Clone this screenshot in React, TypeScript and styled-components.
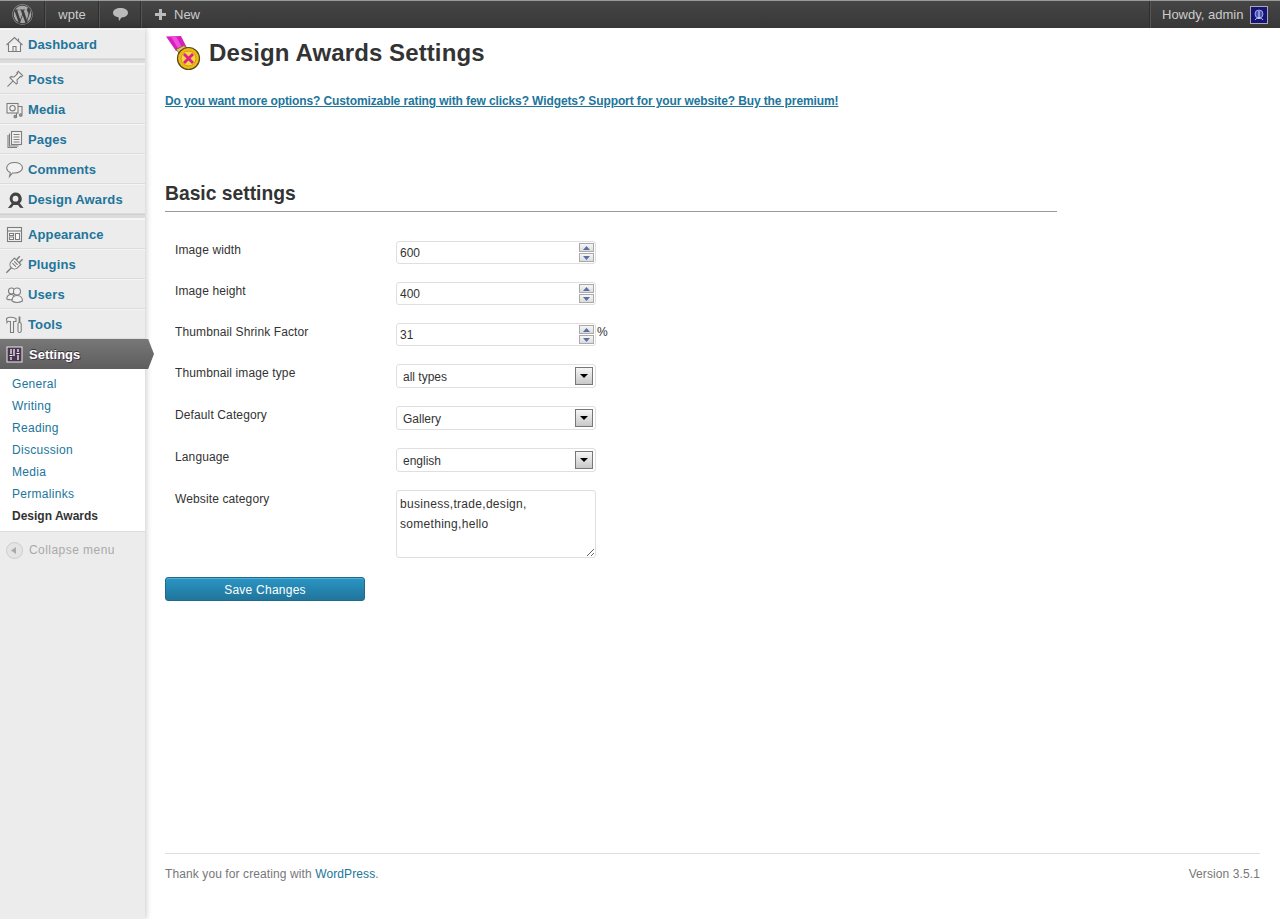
import React from "react";
import styled, { createGlobalStyle } from "styled-components";
import { FaWordpress } from "react-icons/fa";

const Global = createGlobalStyle`
  html, body { margin: 0; padding: 0; height: 100%; background: #fff; }
  body { font-family: "Liberation Sans", Arial, sans-serif; font-size: 12px; color: #333; }
  #root { height: 100%; }
`;

const Page = styled.div`
  display: flex;
  flex-direction: column;
  height: 919px;
  overflow: hidden;
`;

const TopBar = styled.header`
  display: flex;
  align-items: stretch;
  height: 28px;
  flex: none;
  background: linear-gradient(to bottom, #464646, #373737);
  border-top: 1px solid #9a9a9a;
  box-sizing: border-box;
  color: #ccc;
  font-size: 13px;
`;

const BarItem = styled.div<{ $w: number; $plain?: boolean }>`
  display: flex;
  align-items: center;
  gap: 8px;
  box-sizing: border-box;
  width: ${(p) => p.$w}px;
  padding-left: ${(p) => (p.$w > 60 ? 13 : 0)}px;
  justify-content: ${(p) => (p.$w > 60 ? "flex-start" : "center")};
  margin-right: 1px;
  ${(p) => (p.$plain ? "" : "border-right: 1px solid #2f2f2f; box-shadow: 1px 0 0 #555;")}
`;

const BarSpacer = styled.div`
  flex: 1;
`;

const BarUser = styled.div`
  display: flex;
  align-items: center;
  gap: 7px;
  width: 131px;
  box-sizing: border-box;
  padding-left: 12px;
  border-left: 1px solid #2f2f2f;
  box-shadow: inset 1px 0 0 #555;
`;

const Avatar = styled.svg`
  width: 18px;
  height: 18px;
  flex: none;
`;

const Body = styled.div`
  flex: 1;
  display: flex;
  min-height: 0;
`;

const Sidebar = styled.nav`
  width: 145px;
  flex: none;
  background: #ececec;
  position: relative;
  box-shadow: 1px 0 6px rgba(0, 0, 0, 0.22);
  z-index: 1;
  padding-top: 1px;
`;

const MenuItem = styled.a<{ $active?: boolean }>`
  position: relative;
  display: flex;
  align-items: center;
  height: 30px;
  box-sizing: border-box;
  padding-left: 6px;
  gap: ${(p) => (p.$active ? 6 : 5)}px;
  font-size: 13px;
  font-weight: bold;
  letter-spacing: ${(p) => (p.$active ? 0 : 0.12)}px;
  color: ${(p) => (p.$active ? "#fff" : "#21759b")};
  text-shadow: ${(p) => (p.$active ? "0 -1px 0 #333, 1px 1px 0 #4a3550" : "none")};
  background: ${(p) => (p.$active ? "linear-gradient(to bottom, #777, #5e5e5e)" : "transparent")};
  border-top: ${(p) => (p.$active ? "0" : "1px solid #f5f5f5")};
  border-bottom: ${(p) => (p.$active ? "0" : "1px solid #dcdcdc")};
  ${(p) =>
    p.$active
      ? `&::after {
          content: "";
          position: absolute;
          left: 100%;
          top: 0;
          width: 9px;
          height: 30px;
          background: linear-gradient(to bottom, #777, #5e5e5e);
          clip-path: polygon(0 0, 35% 0, 100% 50%, 35% 100%, 0 100%);
        }`
      : ""}
`;

const MenuSeparator = styled.div`
  height: 5px;
  background: #dcdcdc;
  border-top: 1px solid #d0d0d0;
  border-bottom: 1px solid #f5f5f5;
  box-sizing: border-box;
`;

const IconSvg = styled.svg`
  width: 17px;
  height: 17px;
  flex: none;
  fill: #f2f2f2;
  stroke: #7d7d7d;
  stroke-width: 1.1;
  overflow: visible;
`;

const SubMenu = styled.div`
  background: #fff;
  padding: 4px 0;
  border-bottom: 1px solid #dcdcdc;
`;

const SubItem = styled.a<{ $current?: boolean }>`
  display: block;
  height: 22px;
  line-height: 22px;
  padding-left: 12px;
  font-size: 12px;
  letter-spacing: ${(p) => (p.$current ? 0 : 0.3)}px;
  color: ${(p) => (p.$current ? "#333" : "#21759b")};
  font-weight: ${(p) => (p.$current ? "bold" : "normal")};
`;

const Collapse = styled.div`
  display: flex;
  align-items: center;
  gap: 6px;
  height: 36px;
  padding-left: 6px;
  color: #aaa;
  font-size: 12px;
  letter-spacing: 0.45px;
`;

const Main = styled.main`
  flex: 1;
  min-width: 0;
  display: flex;
  flex-direction: column;
  padding: 0 20px;
`;

const TitleRow = styled.div`
  display: flex;
  align-items: center;
  gap: 7px;
  padding-top: 7px;
  height: 37px;
`;

const Title = styled.h2`
  margin: 0 0 2px;
  font-size: 24px;
  font-weight: bold;
  line-height: 30px;
  letter-spacing: 0.1px;
  color: #333;
`;

const PromoLink = styled.a`
  display: block;
  margin-top: 22px;
  font-size: 12px;
  line-height: 14px;
  font-weight: bold;
  letter-spacing: -0.11px;
  color: #21759b;
  text-decoration: underline;
`;

const SectionTitle = styled.h3`
  margin: 74px 0 0;
  width: 892px;
  font-size: 19.3px;
  line-height: 24px;
  font-weight: bold;
  color: #333;
  padding-bottom: 5px;
  border-bottom: 1px solid #999;
`;

const Form = styled.form`
  margin: 29px 0 0;
  display: flex;
  flex-direction: column;
`;

const Row = styled.div<{ $gap: number }>`
  display: flex;
  align-items: flex-start;
  margin-bottom: ${(p) => p.$gap}px;
`;

const Label = styled.label`
  width: 231px;
  flex: none;
  box-sizing: border-box;
  padding: 2px 0 0 10px;
  font-size: 12px;
  line-height: 14px;
  letter-spacing: 0.12px;
  color: #333;
`;

const Field = styled.div<{ $h: number }>`
  width: 200px;
  height: ${(p) => p.$h}px;
  box-sizing: border-box;
  display: flex;
  align-items: center;
  background: #fff;
  border: 1px solid #dfdfdf;
  border-radius: 3px;
`;

const NumberInput = styled.input`
  flex: 1;
  min-width: 0;
  border: 0;
  outline: 0;
  padding: 1px 0 0 3px;
  background: transparent;
  font: 12px "Liberation Sans", Arial, sans-serif;
  color: #333;
`;

const Spinner = styled.div`
  width: 15px;
  height: 19px;
  margin-right: 1px;
  flex: none;
  display: flex;
  flex-direction: column;
  justify-content: space-between;
`;

const SpinButton = styled.div`
  height: 9px;
  box-sizing: border-box;
  border: 1px solid #a9a9a9;
  background: linear-gradient(to bottom, #f6f6f6, #dcdcdc);
  display: flex;
  align-items: center;
  justify-content: center;
`;

const SpinArrow = styled.svg`
  width: 7px;
  height: 4px;
  fill: #5a6fa8;
`;

const Percent = styled.span`
  margin-left: 1px;
  line-height: 14px;
  padding-top: 2px;
  color: #333;
`;

const SelectText = styled.span`
  flex: 1;
  padding: 1px 0 0 6px;
  font-size: 12px;
  color: #333;
`;

const SelectButton = styled.div`
  width: 18px;
  height: 18px;
  margin-right: 2px;
  box-sizing: border-box;
  flex: none;
  border: 1px solid #777;
  background: linear-gradient(to bottom, #f6f6f6, #c8c8c8);
  display: flex;
  align-items: center;
  justify-content: center;
`;

const SelectArrow = styled.svg`
  width: 8px;
  height: 4px;
  fill: #000;
`;

const TextArea = styled.textarea`
  width: 200px;
  height: 68px;
  box-sizing: border-box;
  border: 1px solid #dfdfdf;
  border-radius: 3px;
  outline: 0;
  padding: 3px 3px;
  margin: 0;
  font: 12px/20px "Liberation Sans", Arial, sans-serif;
  letter-spacing: 0.3px;
  color: #333;
  display: block;
`;

const SaveButton = styled.button`
  width: 200px;
  height: 24px;
  padding: 2px 0 0;
  border: 1px solid #1f6a8c;
  border-radius: 3px;
  background: linear-gradient(to bottom, #2a95c5, #21759b);
  color: #fff;
  font: 12px "Liberation Sans", Arial, sans-serif;
  letter-spacing: 0.25px;
  box-shadow: inset 0 1px 0 rgba(120, 200, 230, 0.5);
`;

const Footer = styled.footer`
  margin-top: auto;
  height: 66px;
  box-sizing: border-box;
  border-top: 1px solid #dfdfdf;
  padding-top: 13px;
  display: flex;
  justify-content: space-between;
  font-size: 12px;
  line-height: 14px;
  letter-spacing: 0.1px;
  color: #777;
`;

const FooterLink = styled.a`
  color: #21759b;
`;

type IconProps = { children: React.ReactNode };
const Ico = ({ children }: IconProps) => <IconSvg viewBox="0 0 17 17">{children}</IconSvg>;

const icons: Record<string, React.ReactNode> = {
  Dashboard: (
    <Ico>
      <path d="M2.500 8v7.500h12V8" />
      <path d="M.5 9 8.500 1.500 16.500 9M7 15.500V10.500h3v5M12.500 2.500v2.500" fill="none" />
    </Ico>
  ),
  Posts: (
    <Ico>
      <g transform="rotate(45 8.500 8.500)">
        <path d="M8.500 10v8.500" fill="none" />
        <path d="M5.500 0h6v2h-1v5l2.500 2v1.500H4V9l2.500-2V2h-1z" />
      </g>
    </Ico>
  ),
  Media: (
    <Ico>
      <path d="M12 5.500h4V13M10.500 12v3.500" fill="none" />
      <rect x="1" y="2.500" width="11" height="9.500" />
      <circle cx="6.500" cy="7.200" r="2.700" />
      <circle cx="14.800" cy="14" r="1.300" fill="#999" />
      <circle cx="9.300" cy="15.500" r="1.300" fill="#999" />
    </Ico>
  ),
  Pages: (
    <Ico>
      <path d="M2 4v12.500h9" />
      <path d="M3.500 2.500v12.500h9" />
      <rect x="5.500" y=".5" width="10" height="13" />
      <path d="M7.500 3.500h6M7.500 6h6M7.500 8.500h6M7.500 11h6" fill="none" />
    </Ico>
  ),
  Comments: (
    <Ico>
      <path d="M8.500 1.500c4.200 0 8 2 8 5.200s-3.800 5.300-8 5.300H6.500L3.500 15.500l.8-4C2 10.500.7 8.700.7 6.700c0-3.200 3.600-5.200 7.800-5.200z" />
    </Ico>
  ),
  "Design Awards": (
    <IconSvg viewBox="0 0 17 17">
      <path
        d="M9.500 0a6.200 6.200 0 0 1 4.300 10.700l3.800 4.800-3.600-.3-2-2.700H7.500l-2 2.700-3.600.3 3.800-4.800A6.200 6.200 0 0 1 9.500 0zm0 3.300a2.900 2.900 0 1 0 0 5.800 2.900 2.900 0 0 0 0-5.800z"
        fill="#444"
        stroke="none"
        transform="translate(0 1.500)"
      />
    </IconSvg>
  ),
  Appearance: (
    <Ico>
      <rect x="1.500" y="1.500" width="14" height="14" />
      <path d="M1.500 5h14" fill="none" />
      <path d="M3.500 7.500h4v2h-4zM3.500 11h4v2.500h-4zM9.500 7.500h4v6h-4z" fill="#fff" />
    </Ico>
  ),
  Plugins: (
    <Ico>
      <g transform="rotate(45 8.500 8.500)">
        <path d="M6.500 4V-1M10.500 4V-1M8.500 13v7" fill="none" strokeWidth="1.400" />
        <path d="M4 4h9v4.500c0 2.500-2 4.500-4.500 4.500S4 11 4 8.500z" />
        <path d="M6 6.500h5M6 9h5" fill="none" />
      </g>
    </Ico>
  ),
  Users: (
    <Ico>
      <path d="M.8 13c0-3 2-4.500 4.700-4.500s3 1.500 3 4.500c-2.500 1-5.500 1-7.700 0z" />
      <circle cx="5.500" cy="5" r="3" />
      <path d="M6 15c0-3.500 2-5.500 5-5.500s5.500 2 5.500 5.500c-3.500 1.800-7.500 1.800-10.500 0z" />
      <circle cx="11" cy="5.500" r="3.500" />
    </Ico>
  ),
  Tools: (
    <Ico>
      <path d="M.5 2.500c2-1.500 6-1.500 9.500 0V5.500H7.500V16.500H4.500V5.500c-1.500-.5-3 0-3.500 1z" />
      <path d="M13.500 .5v6" fill="none" strokeWidth="1.800" />
      <rect x="12" y="6.500" width="3.200" height="10" rx="1.500" />
    </Ico>
  ),
  Settings: (
    <IconSvg viewBox="0 0 17 17">
      <rect x="1" y="1" width="15" height="15" fill="#4a3550" stroke="#ddd" />
      <path d="M5 3v5M5 11v3M8 3v7M12 3v3M12 9v5M3.500 9.500h3M10.500 7.500h3" stroke="#fff" strokeWidth="1.200" fill="none" />
    </IconSvg>
  ),
};

const MenuRow = ({ name, active }: { name: string; active?: boolean }) => (
  <MenuItem $active={active}>
    {icons[name]}
    {name}
  </MenuItem>
);

const NumberRow = ({ label, value, suffix }: { label: string; value: string; suffix?: string }) => (
  <Row $gap={18}>
    <Label>{label}</Label>
    <Field $h={23}>
      <NumberInput defaultValue={value} />
      <Spinner>
        <SpinButton>
          <SpinArrow viewBox="0 0 7 4">
            <path d="M3.500 0 7 4H0z" />
          </SpinArrow>
        </SpinButton>
        <SpinButton>
          <SpinArrow viewBox="0 0 7 4">
            <path d="M0 0h7L3.500 4z" />
          </SpinArrow>
        </SpinButton>
      </Spinner>
    </Field>
    {suffix && <Percent>{suffix}</Percent>}
  </Row>
);

const SelectRow = ({ label, value }: { label: string; value: string }) => (
  <Row $gap={18}>
    <Label>{label}</Label>
    <Field $h={24}>
      <SelectText>{value}</SelectText>
      <SelectButton>
        <SelectArrow viewBox="0 0 8 4">
          <path d="M0 0h8L4 4z" />
        </SelectArrow>
      </SelectButton>
    </Field>
  </Row>
);

export default function App() {
  return (
    <Page>
      <Global />
      <TopBar>
        <BarItem $w={45}>
          <FaWordpress size={21} color="#a8a8a8" />
        </BarItem>
        <BarItem $w={53}>wpte</BarItem>
        <BarItem $w={41}>
          <svg width="15" height="13" viewBox="0 0 15 13">
            <path
              d="M7.500 0C11.600 0 15 1.800 15 4.800S11.600 9.500 8.500 9.500L6 13l-.5-3.700C2.500 8.800 0 7.500 0 4.800 0 1.800 3.400 0 7.500 0z"
              fill="#bbb"
            />
          </svg>
        </BarItem>
        <BarItem $w={71} $plain>
          <svg width="11" height="11" viewBox="0 0 11 11">
            <path d="M4 0h3v4h4v3H7v4H4V7H0V4h4z" fill="#bbb" />
          </svg>
          New
        </BarItem>
        <BarSpacer />
        <BarUser>
          Howdy, admin
          <Avatar viewBox="0 0 18 18">
            <rect x="0.500" y="0.500" width="17" height="17" fill="#14147a" stroke="#aaa" />
            <circle cx="9" cy="8" r="4" fill="#4a50b0" stroke="#9fa8e0" />
            <path d="M5 14c1-2.500 7-2.500 8 0M9 5v8" stroke="#d8dcf5" fill="none" />
          </Avatar>
        </BarUser>
      </TopBar>
      <Body>
        <Sidebar>
          <MenuRow name="Dashboard" />
          <MenuSeparator />
          <MenuRow name="Posts" />
          <MenuRow name="Media" />
          <MenuRow name="Pages" />
          <MenuRow name="Comments" />
          <MenuRow name="Design Awards" />
          <MenuSeparator />
          <MenuRow name="Appearance" />
          <MenuRow name="Plugins" />
          <MenuRow name="Users" />
          <MenuRow name="Tools" />
          <MenuRow name="Settings" active />
          <SubMenu>
            <SubItem>General</SubItem>
            <SubItem>Writing</SubItem>
            <SubItem>Reading</SubItem>
            <SubItem>Discussion</SubItem>
            <SubItem>Media</SubItem>
            <SubItem>Permalinks</SubItem>
            <SubItem $current>Design Awards</SubItem>
          </SubMenu>
          <Collapse>
            <svg width="17" height="17" viewBox="0 0 17 17">
              <circle cx="8.500" cy="8.500" r="8" fill="#e4e4e4" stroke="#ccc" />
              <path d="M5 8.500 10 5v7z" fill="#aaa" />
            </svg>
            Collapse menu
          </Collapse>
        </Sidebar>
        <Main>
          <TitleRow>
            <svg width="37" height="37" viewBox="0 0 37 37">
              <path d="M1 1.500 16 1 22 13 11 16z" fill="#d61fc0" />
              <path d="M6 1.500 11 1.500 18 14 14 15z" fill="#f04fdc" />
              <path d="M11 14.500 19 10.500 23 14 16 20z" fill="#e0c868" stroke="#6b5a20" strokeWidth="0.800" />
              <circle cx="23.500" cy="23.500" r="11" fill="#f0b818" stroke="#5a4a1a" strokeWidth="1.200" />
              <circle cx="23.500" cy="23.500" r="7.500" fill="#f8d63c" stroke="#d09a10" />
              <path d="M19 19l9 9M28 19l-9 9" stroke="#d8208f" strokeWidth="2.800" />
            </svg>
            <Title>Design Awards Settings</Title>
          </TitleRow>
          <PromoLink>
            Do you want more options? Customizable rating with few clicks? Widgets? Support for your website? Buy the
            premium!
          </PromoLink>
          <SectionTitle>Basic settings</SectionTitle>
          <Form>
            <NumberRow label="Image width" value="600" />
            <NumberRow label="Image height" value="400" />
            <NumberRow label="Thumbnail Shrink Factor" value="31" suffix="%" />
            <SelectRow label="Thumbnail image type" value="all types" />
            <SelectRow label="Default Category" value="Gallery" />
            <SelectRow label="Language" value="english" />
            <Row $gap={19}>
              <Label>Website category</Label>
              <TextArea defaultValue={"business,trade,design,\nsomething,hello"} />
            </Row>
            <div>
              <SaveButton type="button">Save Changes</SaveButton>
            </div>
          </Form>
          <Footer>
            <span>
              Thank you for creating with <FooterLink>WordPress</FooterLink>.
            </span>
            <span>Version 3.5.1</span>
          </Footer>
        </Main>
      </Body>
    </Page>
  );
}
